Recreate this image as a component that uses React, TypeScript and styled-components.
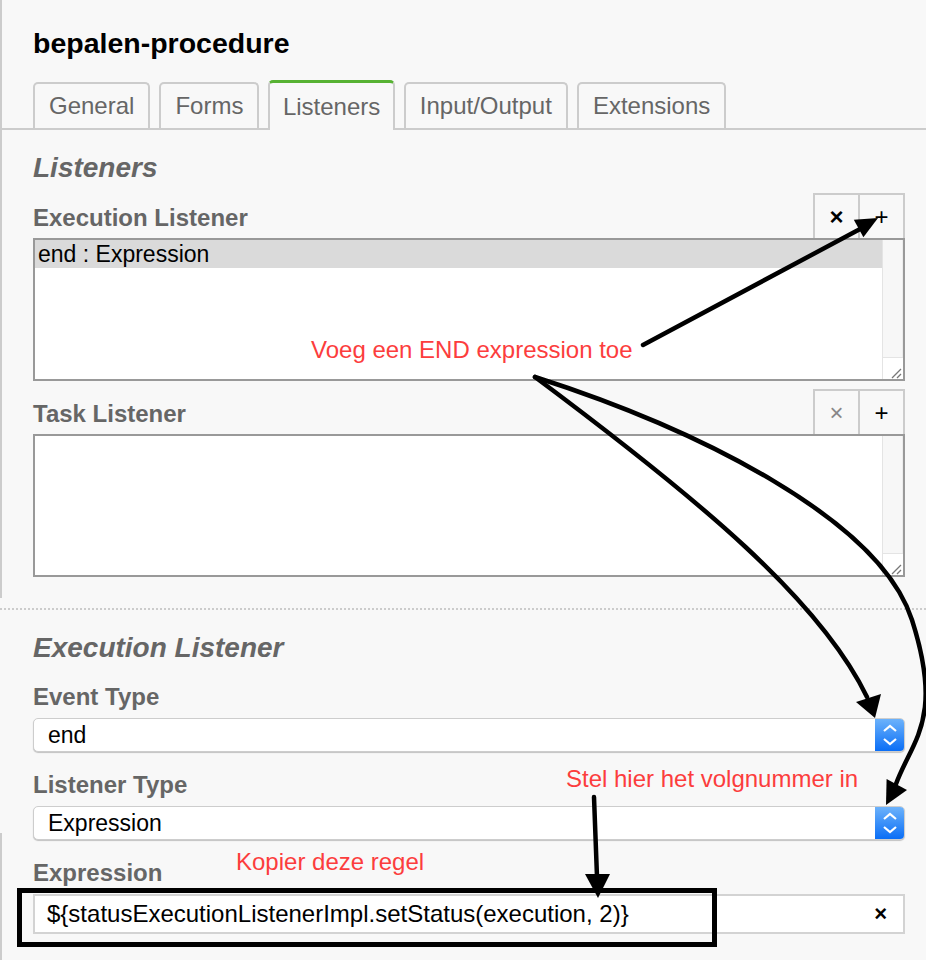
import React from 'react';
import styled, { createGlobalStyle } from 'styled-components';

const GlobalStyle = createGlobalStyle`
	html, body {
		margin: 0;
		padding: 0;
		background: #f8f8f8;
	}
	body {
		font-family: "Liberation Sans", Arial, sans-serif;
	}
`

const Page = styled.div`
	position: relative;
	width: 926px;
	height: 960px;
	overflow: hidden;
	background: #f8f8f8;
	display: flex;
	flex-direction: column;
`

const UpperPanel = styled.div`
	border-left: 2px solid #ccc;
	padding-bottom: 21px;
`

const Title = styled.h1`
	margin: 27px 0 0;
	padding-left: 31px;
	font-size: 28.5px;
	line-height: 32px;
	font-weight: bold;
	color: #000;
`

const TabBar = styled.div`
	display: flex;
	align-items: flex-end;
	gap: 9px;
	margin-top: 21px;
	padding-left: 31px;
	border-bottom: 2px solid #ccc;
`

const Tab = styled.div<{ $active?: boolean }>`
	box-sizing: border-box;
	height: ${props => props.$active ? '50px' : '46px'};
	margin-bottom: ${props => props.$active ? '-2px' : '0'};
	padding: ${props => props.$active ? '0 12.5px' : '0 14px'};
	display: flex;
	align-items: center;
	border: 2px solid #ccc;
	border-top: ${props => props.$active ? '3px solid #57b233' : '2px solid #ccc'};
	border-bottom: none;
	border-radius: 5px 5px 0 0;
	background: #f8f8f8;
	font-size: 24px;
	color: #666;
`

const Body = styled.div`
	padding: 0 21px 0 31px;
`

const SectionHeading = styled.h2`
	margin: 22px 0 0;
	font-size: 28px;
	line-height: 32px;
	font-style: italic;
	font-weight: bold;
	color: #666;
`

const FieldHeader = styled.div<{ $gap: number }>`
	display: flex;
	align-items: flex-end;
	justify-content: space-between;
	margin-top: ${props => props.$gap}px;
`

const Label = styled.div`
	font-size: 24px;
	line-height: 28px;
	font-weight: bold;
	color: #666;
`

const HeaderLabel = styled(Label)`
	margin-bottom: 6px;
`

const FieldLabel = styled(Label)`
	margin-top: 19px;
`

const ButtonGroup = styled.div`
	display: flex;
`

const IconButton = styled.div<{ $disabled?: boolean }>`
	box-sizing: border-box;
	width: 47px;
	height: 45px;
	display: flex;
	align-items: center;
	justify-content: center;
	border: 2px solid #ccc;
	border-bottom: none;
	background: #f8f8f8;
	font-size: 24px;
	font-weight: ${props => props.$disabled ? 'normal' : 'bold'};
	color: ${props => props.$disabled ? '#888' : '#000'};
	& + & {
		margin-left: -2px;
		font-weight: normal;
	}
`

const ListBox = styled.div`
	box-sizing: border-box;
	height: 143px;
	display: flex;
	border: 2px solid #999;
	background: #fff;
`

const Items = styled.div`
	flex: 1;
`

const ListItem = styled.div<{ $selected?: boolean }>`
	height: 28px;
	line-height: 28px;
	padding-left: 3px;
	font-size: 23px;
	color: #000;
	background: ${props => props.$selected ? '#dadada' : 'transparent'};
`

const Scrollbar = styled.div`
	width: 20px;
	display: flex;
	flex-direction: column;
	border-left: 1px solid #e4e4e4;
`

const Track = styled.div`
	flex: 1;
	background: #f7f7f7;
	border-right: 1px solid #ececec;
`

const Corner = styled.div`
	height: 21px;
	border-top: 1px solid #e4e4e4;
	background: #fff;
	display: flex;
	align-items: flex-end;
	justify-content: flex-end;
`

const Divider = styled.div`
	margin-top: 10px;
	border-top: 2px dotted #ccc;
`

const LowerPanel = styled.div`
	position: relative;
	flex: 1;
	padding: 0 21px 0 33px;
	&::before {
		content: '';
		position: absolute;
		left: 0;
		top: 223px;
		bottom: 0;
		width: 2px;
		background: #ccc;
	}
`

const Select = styled.div`
	box-sizing: border-box;
	margin-top: 7px;
	height: 34px;
	display: flex;
	border: 1px solid #cdcdcd;
	border-radius: 5px;
	background: #fff;
	box-shadow: 0 1px 1px rgba(0, 0, 0, 0.22);
	overflow: hidden;
`

const SelectValue = styled.div`
	flex: 1;
	padding-left: 14px;
	font-size: 23px;
	line-height: 32px;
	color: #000;
`

const Stepper = styled.div`
	width: 29px;
	display: flex;
	align-items: center;
	justify-content: center;
	background: linear-gradient(#6cb2fb, #0a6ef6);
`

const TextInput = styled.div`
	box-sizing: border-box;
	margin-top: 7px;
	height: 40px;
	display: flex;
	align-items: center;
	justify-content: space-between;
	padding: 0 16px 0 12px;
	border: 2px solid #d3d3d3;
	background: #fff;
	font-size: 24px;
	color: #000;
`

const ClearMark = styled.span`
	font-size: 22px;
	font-weight: bold;
`

const Note = styled.span<{ $left: number; $top: number }>`
	position: absolute;
	left: ${props => props.$left}px;
	top: ${props => props.$top}px;
	font-size: 24px;
	line-height: 24px;
	color: #fc3d3d;
	white-space: nowrap;
	z-index: 2;
`

const Overlay = styled.svg`
	position: absolute;
	left: 0;
	top: 0;
	pointer-events: none;
	z-index: 3;
`

function Chevrons() {
	return (
		<svg width="18" height="22" viewBox="0 0 18 22">
			<path d="M3 7 L9 2 L15 7" fill="none" stroke="#fff" strokeWidth="2.2" />
			<path d="M3 15 L9 20 L15 15" fill="none" stroke="#fff" strokeWidth="2.2" />
		</svg>
	);
}

function Grip() {
	return (
		<svg width="14" height="12" viewBox="0 0 14 12">
			<path d="M3 11 L12 2 M8 11 L12 7" stroke="#777" strokeWidth="1.3" />
		</svg>
	);
}

function ListField({ label, gap, removable, items }: { label: string; gap: number; removable: boolean; items: string[] }) {
	return (
		<>
			<FieldHeader $gap={gap}>
				<HeaderLabel>{label}</HeaderLabel>
				<ButtonGroup>
					<IconButton $disabled={!removable}>×</IconButton>
					<IconButton>+</IconButton>
				</ButtonGroup>
			</FieldHeader>
			<ListBox>
				<Items>
					{items.map((item, i) => <ListItem key={item} $selected={i === 0}>{item}</ListItem>)}
				</Items>
				<Scrollbar>
					<Track />
					<Corner><Grip /></Corner>
				</Scrollbar>
			</ListBox>
		</>
	);
}

function Arrows() {
	return (
		<Overlay width="926" height="960" viewBox="0 0 926 960">
			<g stroke="#000" strokeWidth="4.5" fill="none" strokeLinecap="round">
				<path d="M643 345 L862 228" />
				<path d="M535 377 C700 500 820 600 867 697" />
				<path d="M535 377 C700 430 880 520 912 620 S912 740 896 784" />
				<path d="M594 797 L597 877" />
				<rect x="19.5" y="890.5" width="695" height="54" strokeWidth="5" strokeLinecap="butt" />
			</g>
			<g fill="#000">
				<polygon points="878,218 853.8,219.7 863.4,237.3" />
				<polygon points="875,718 856,702 881,694" />
				<polygon points="886,805 886.6,779 907,790" />
				<polygon points="598,898 585,874 610,874" />
			</g>
		</Overlay>
	);
}

function App() {
	return (
		<Page>
			<GlobalStyle />
			<UpperPanel>
				<Title>bepalen-procedure</Title>
				<TabBar>
					<Tab>General</Tab>
					<Tab>Forms</Tab>
					<Tab $active>Listeners</Tab>
					<Tab>Input/Output</Tab>
					<Tab>Extensions</Tab>
				</TabBar>
				<Body>
					<SectionHeading>Listeners</SectionHeading>
					<ListField label="Execution Listener" gap={9} removable items={['end : Expression']} />
					<ListField label="Task Listener" gap={8} removable={false} items={[]} />
				</Body>
			</UpperPanel>
			<Divider />
			<LowerPanel>
				<SectionHeading>Execution Listener</SectionHeading>
				<FieldLabel>Event Type</FieldLabel>
				<Select>
					<SelectValue>end</SelectValue>
					<Stepper><Chevrons /></Stepper>
				</Select>
				<FieldLabel>Listener Type</FieldLabel>
				<Select>
					<SelectValue>Expression</SelectValue>
					<Stepper><Chevrons /></Stepper>
				</Select>
				<FieldLabel>Expression</FieldLabel>
				<TextInput>
					<span>{'${statusExecutionListenerImpl.setStatus(execution, 2)}'}</span>
					<ClearMark>×</ClearMark>
				</TextInput>
			</LowerPanel>
			<Note $left={311} $top={338}>Voeg een END expression toe</Note>
			<Note $left={566} $top={767}>Stel hier het volgnummer in</Note>
			<Note $left={236} $top={850}>Kopier deze regel</Note>
			<Arrows />
		</Page>
	);
}

export default App;
